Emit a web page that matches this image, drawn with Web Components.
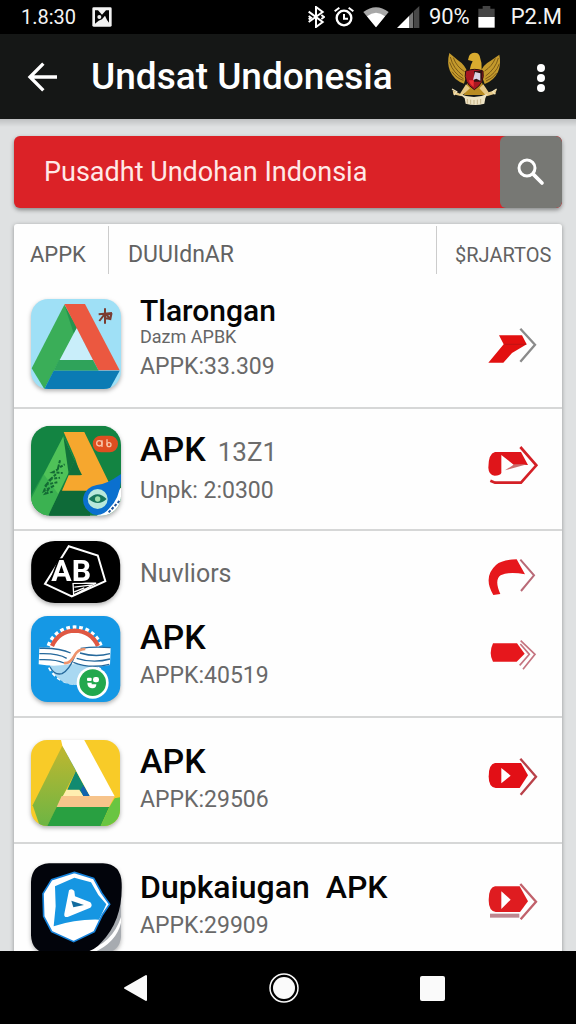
<!DOCTYPE html>
<html lang="id">
<head>
<meta charset="utf-8">
<meta name="viewport" content="width=device-width, initial-scale=1">
<title>Undsat Undonesia</title>
<style>
html, body { margin: 0; height: 100%; }
body { font-family: Roboto, "Liberation Sans", sans-serif; background: #dfe1e2; color: #000; }
</style>
</head>
<body>
<download-app></download-app>

<template id="t-app">
<style>
:host { display: flex; flex-direction: column; height: 100vh; }
main { flex: 1; min-height: 0; overflow-y: auto; scrollbar-width: none; padding: 17px 14px 0; background: linear-gradient(#bfc1c2, #dfe1e2 8px); }
.card { margin-top: 16px; background: #fefefe; border-radius: 3px 3px 0 0; box-shadow: 0 1px 4px rgba(0,0,0,.35); }
</style>
<status-bar></status-bar>
<app-bar></app-bar>
<main>
  <search-bar></search-bar>
  <div class="card">
    <list-head></list-head>
    <app-group style="--h:128px">
      <app-item compact>
        <app-icon slot="icon" name="drive"></app-icon>
        <span slot="title">Tlarongan</span><span slot="by">Dazm APBK</span><span slot="sub">APPK:33.309</span>
        <go-button slot="go" name="bolt"></go-button>
      </app-item>
    </app-group>
    <app-group style="--h:122px">
      <app-item>
        <app-icon slot="icon" name="green"></app-icon>
        <span slot="title">APK</span><span slot="note">13Z1</span><span slot="sub">Unpk: 2:0300</span>
        <go-button slot="go" name="outline"></go-button>
      </app-item>
    </app-group>
    <app-group style="--h:187px">
      <app-item plain>
        <app-icon slot="icon" name="ab"></app-icon>
        <span slot="sub">Nuvliors</span>
        <go-button slot="go" name="curve"></go-button>
      </app-item>
      <app-item>
        <app-icon slot="icon" name="sun"></app-icon>
        <span slot="title">APK</span><span slot="sub">APPK:40519</span>
        <go-button slot="go" name="tag"></go-button>
      </app-item>
    </app-group>
    <app-group style="--h:126px">
      <app-item>
        <app-icon slot="icon" name="yellow"></app-icon>
        <span slot="title">APK</span><span slot="sub">APPK:29506</span>
        <go-button slot="go" name="play"></go-button>
      </app-item>
    </app-group>
    <app-group style="--h:126px">
      <app-item long>
        <app-icon slot="icon" name="blue"></app-icon>
        <span slot="title">Dupkaiugan&nbsp; APK</span><span slot="sub">APPK:29909</span>
        <go-button slot="go" name="playfade"></go-button>
      </app-item>
    </app-group>
  </div>
</main>
<nav-bar></nav-bar>
</template>

<template id="t-status">
<style>
:host { display: flex; align-items: center; height: 34px; padding: 0 14px 0 21px; background: #000; color: #f4f4f4; font-size: 22px; line-height: 30px; flex: none; }
svg { display: block; flex: none; }
.time { font-size: 20px; }
.pic { margin-left: 16px; }
.right { margin-left: auto; display: flex; align-items: center; gap: 8px; }
.end { margin-left: 8px; }
</style>
<span class="time">1.8:30</span>
<svg class="pic" width="20" height="20" viewBox="0 0 60 60"><path fill="#f2f2f2" d="M5 1h50q4 0 4 4v50q0 4-4 4H5q-4 0-4-4V5q0-4 4-4z"/><path fill="#050505" d="M9 10h9l12 13 12-13h9v37l-6-8-6-13-9 11-10 4-11 9z"/><circle cx="22" cy="30" r="6" fill="#eee"/></svg>
<div class="right">
<svg width="18" height="22" viewBox="0 0 54 66"><path fill="none" stroke="#fff" stroke-width="6" d="M5 17l42 31-20 15V3l20 15L5 48M5 30l7 5-7 5M43 27l8 6-8 6"/></svg>
<svg width="22" height="22" viewBox="0 0 66 66"><circle cx="33" cy="36" r="22" fill="none" stroke="#fff" stroke-width="7"/><path fill="none" stroke="#fff" stroke-width="6" d="M5 16L19 5M61 16L47 5M33 24v14h12"/></svg>
<svg width="26" height="22" viewBox="0 0 78 66"><path fill="#a8a8a8" d="M1 18Q39-10 77 18L39 64z"/><path fill="#fff" d="M12 31Q39 10 66 31L39 64z"/></svg>
<svg width="24" height="22" viewBox="0 0 72 66"><path fill="#fff" d="M0 66L36 30v36z"/><path fill="#777" d="M36 30L48 18v48H36z"/><path fill="#484848" d="M50 16L67 0v66H50z"/></svg>
<span>90%</span>
<svg width="17" height="22" viewBox="0 0 51 66"><path fill="#444" d="M14 0h23v8h13v26H1V8h13z"/><path fill="#fff" d="M1 33h49v32H1z"/></svg>
<span class="end">P2.M</span>
</div>
</template>

<template id="t-bar">
<style>
:host { display: flex; align-items: center; height: 85px; padding: 0 28px 0 20px; background: #151716; color: #fff; flex: none; }
button { border: 0; background: none; padding: 0; color: inherit; display: block; }
svg { display: block; }
h1 { margin: 0 0 0 23px; font-size: 37px; line-height: 44px; font-weight: 500; white-space: nowrap; flex: 1; }
.crest { margin-right: 33px; }
</style>
<button aria-label="Kembali"><svg width="48" height="48" viewBox="60 158 144 144"><path fill="none" stroke="#fff" stroke-width="10" d="M171 230H92M130 190l-40 40 40 40"/></svg></button>
<h1>Undsat Undonesia</h1>
<svg class="crest" width="56" height="56" viewBox="472 146 168 168">
<path fill="#c49a2c" d="M482 158q-8 30 2 54 12 28 42 38l10-34q-6-22-30-38z"/>
<path fill="#c49a2c" d="M632 163q6 28-4 52-12 26-40 36l-12-34q4-22 30-36z"/>
<path fill="none" stroke="#6d4d12" stroke-width="2.500" d="M485 170q8 34 38 56M483 186q10 32 42 50M490 214q14 20 34 26M494 172q10 28 34 42M629 173q-8 32-38 54M632 190q-10 30-42 46M624 218q-14 18-32 24M620 174q-10 24-32 38"/>
<path fill="#d9ab2f" d="M541 168q4-11 17-11 12 0 15 10 8 22 6 42h-36q2-14 9-26l-14-4z"/>
<path fill="#b98b22" d="M538 240h40l14 44h-66z"/>
<path fill="#e6c987" d="M532 252l-18 28-22-10 2 12 24 6 26-24zM584 252l16 24 24-8-4 12-26 8-22-24z"/>
<path fill="none" stroke="#f1e2b8" stroke-width="4" d="M490 266l14 8-8 10M624 266l-12 8 8 8"/>
<path fill="#eee3c4" d="M512 280q46 20 84 0l-6 14-3 16q-28 8-56 0l-3-16z"/>
<path stroke="#b39d6b" stroke-width="2" d="M536 296v14M546 298v14M556 299v14M566 298v14M576 296v14"/>
<path fill="#a91722" stroke="#2c1010" stroke-width="3" d="M531 212q28-10 52 0 6 36-26 56-34-22-26-56z"/>
<path fill="#311" d="M556 212h24q3 22-4 32h-20z"/><path fill="#d7d3e2" d="M559 215l16 4v22l-12-6-10 4z"/><path fill="#e33" d="M541 240h14v20q-12-8-14-20z"/>
</svg>
<button aria-label="Menu lainnya"><svg width="13" height="34" viewBox="0 0 13 34"><g fill="#fff"><circle cx="6" cy="8" r="4"/><circle cx="6" cy="18" r="4"/><circle cx="6" cy="28" r="4"/></g></svg></button>
</template>

<template id="t-search">
<style>
:host { display: flex; height: 72px; border-radius: 6px; background: #db2227; box-shadow: 0 2px 4px rgba(0,0,0,.4); overflow: hidden; }
input { flex: 1; min-width: 0; border: 0; outline: 0; background: none; padding: 0 0 0 30px; font: 400 27px/36px Roboto, "Liberation Sans", sans-serif; color: #ffe9e7; }
button { border: 0; width: 62px; padding: 0; background: #777874; border-radius: 6px; display: grid; place-items: center; }
</style>
<input type="text" aria-label="Cari unduhan" value="Pusadht Undohan Indonsia">
<button aria-label="Cari"><svg width="28" height="28" viewBox="0 0 84 84"><circle cx="30" cy="30" r="24" fill="none" stroke="#fff" stroke-width="9"/><path stroke="#fff" stroke-width="11" stroke-linecap="round" d="M50 50l25 25"/></svg></button>
</template>

<template id="t-head">
<style>
:host { display: flex; height: 57px; font-size: 22px; color: #626262; align-items: flex-start; padding-top: 2px; box-sizing: border-box; }
span { height: 48px; line-height: 58px; box-sizing: border-box; white-space: nowrap; }
.a { width: 95px; padding-left: 16px; border-right: 1px solid #ccc; }
.b { flex: 1; padding-left: 19px; font-size: 23px; }
.c { width: 126px; padding-left: 18px; border-left: 1px solid #ccc; font-size: 20px; }
</style>
<span class="a">APPK</span><span class="b">DUUIdnAR</span><span class="c">$RJARTOS</span>
</template>

<template id="t-group">
<style>
:host { display: flex; flex-direction: column; justify-content: center; min-height: var(--h); gap: 3px; box-sizing: border-box; border-bottom: 2px solid #d6d7d7; }
</style>
<slot></slot>
</template>

<template id="t-item">
<style>
:host { display: flex; align-items: center; padding: 0 22px 0 17px; }
.text { flex: 1; min-width: 0; margin-left: 19px; white-space: nowrap; }
.title { font-size: 34px; line-height: 40px; font-weight: 500; color: #050505; }
.note { font-size: 26px; font-weight: 400; color: #6c6c6c; margin-left: 12px; }
.title, .by, .sub { display: block; }
.sub { font-size: 23px; line-height: 38px; color: #696969; }
:host([plain]) .sub { font-size: 25px; }
:host([compact]) .text { padding-bottom: 6px; }
:host([compact]) .title { font-size: 30px; line-height: 28px; }
.by { font-size: 18px; line-height: 24px; color: #666; }
:host([compact]) .sub { line-height: 36px; }
:host([long]) .title { font-size: 32px; }
.text > [hidden], .title > [hidden] { display: none; }
</style>
<slot name="icon"></slot>
<div class="text">
<div class="title"><slot name="title"></slot><span class="note"><slot name="note"></slot></span></div>
<div class="by"><slot name="by"></slot></div>
<div class="sub"><slot name="sub"></slot></div>
</div>
<slot name="go"></slot>
</template>

<template id="t-nav">
<style>
:host { display: flex; height: 73px; background: #000; align-items: center; justify-content: space-around; padding: 0 70px 0 62px; flex: none; }
button { border: 0; background: none; padding: 0; display: block; }
svg { display: block; }
</style>
<button aria-label="Kembali"><svg width="32" height="32" viewBox="0 0 32 32"><path fill="#fafafa" stroke="#fafafa" stroke-width="2" stroke-linejoin="round" d="M5 16L26 4v24z"/></svg></button>
<button aria-label="Beranda"><svg width="32" height="32" viewBox="0 0 32 32"><circle cx="16" cy="16" r="11" fill="#fafafa"/><circle cx="16" cy="16" r="14" fill="none" stroke="#fafafa" stroke-width="1.500"/></svg></button>
<button aria-label="Aplikasi terbaru"><svg width="32" height="32" viewBox="0 0 32 32"><rect x="4" y="4" width="25" height="25" rx="2" fill="#fafafa"/></svg></button>
</template>

<script>
const ICONS = {
drive: [90, '63 38 270 270', `<defs><clipPath id="k"><rect x="63" y="38" width="270" height="270" rx="52"/></clipPath></defs><g clip-path="url(#k)"><path fill="#9fe0f6" d="M63 38h270v270H63z"/><path fill="#c9eefa" d="M200 125l50 98H145z"/><path fill="#3aae58" d="M163 55l38 68-98 185-38-62z"/><path fill="#1d8a4c" d="M163 55l38 68-10 18z" opacity=".7"/><path fill="#eb5840" d="M163 53h62l104 199h-64z"/><path fill="#2fa35a" d="M147 221h102l17 32H131z"/><path fill="#0b7bb4" d="M131 253h198l-30 55H103z"/><path fill="none" stroke="#7a3c32" stroke-width="6" d="M285 66v46M266 84l40-4M268 104l17-22 18 17M290 84l14 0-3 14-13-2"/></g>`],
green: [90, '63 41 270 270', `<defs><clipPath id="k"><rect x="63" y="46" width="270" height="270" rx="58"/></clipPath></defs><g clip-path="url(#k)"><path fill="#138442" d="M63 46h270v270H63z"/><path fill="#0e6a38" d="M140 240h100v80H115z"/><path fill="#4fc258" d="M160 78l34 72-80 166H70l-12-40z"/><path fill="#2ea74c" d="M100 190l-45 80 20 46h40l30-64z" opacity=".6"/><path fill="#11733a" d="M160 78l34 72-18 40z"/><path fill="#f6a72e" d="M161 65h62l73 150-20 26H156l20-46h36l-16-50z"/><path fill="#11703b" d="M194 150l22 44h-42z"/><path fill="none" stroke="#136b34" stroke-width="6" stroke-dasharray="9 4 14 5" d="M150 150l-6 24 20-12M146 176l-18 10 30 2M138 192l-16 14 28-4M124 206l-14 16 32-6M110 222l-8 20 30-16M116 236l-10 14 22-6"/><rect x="248" y="76" width="76" height="50" rx="25" fill="#df4e20"/><g fill="none" stroke="#f8c3a6" stroke-width="4"><circle cx="268" cy="99" r="8"/><path d="M276 90v20"/><circle cx="297" cy="103" r="6"/><path d="M291 87v18"/></g><path fill="#fff" d="M334 230v90h-76z"/><path fill="#0b70cf" d="M334 190q0 70-36 104-20 26-50 18-34-20-28-52 8-30 40-36 30-2 74-34z"/><circle cx="263" cy="266" r="30" fill="#b9e8db"/><path fill="#16765b" d="M236 266q26-28 54 0-26 24-54 0z"/><circle cx="263" cy="266" r="8" fill="#9de0ac"/><path stroke="#1b5298" stroke-width="6" stroke-dasharray="8 5" d="M296 306l36-38"/></g>`],
ab: [62, '61 36 272 188', `<rect x="61" y="30" width="270" height="188" rx="72"/><path fill="none" stroke="#fff" stroke-width="6" d="M175 46l88 28 23 78-102 46-81-38z"/><path fill="none" stroke="#fff" stroke-width="4" d="M188 158h70l-68 36zM192 170l60-8M192 184l30-12"/><text x="122" y="150" fill="#fff" stroke="#000" stroke-width="10" paint-order="stroke" font-family="Roboto" font-weight="700" font-size="92">AB</text>`],
sun: [96, '63 231 270 288', `<rect x="63" y="255" width="268" height="258" rx="50" fill="#1598e5"/><circle cx="194" cy="372" r="82" fill="none" stroke="#fff" stroke-width="14" stroke-dasharray="11 8"/><circle cx="194" cy="372" r="78" fill="#fff"/><path fill="none" stroke="#df5843" stroke-width="13" d="M126 345q20-44 68-46 50 2 70 46"/><path fill="#a9d8f1" d="M116 390q60 20 154 0-14 66-76 72-62-6-78-72z"/><path fill="#fff" d="M88 350q60-4 94 14 40-24 120-14l-2 52q-60 12-108-6-50 14-106 4z"/><path fill="none" stroke="#26699c" stroke-width="4" d="M88 352q60-2 94 14M88 368q56-2 82 14M88 386q50-2 74 10M212 352q40-6 90-2M210 366q46 14 90 2M200 382q50 16 100 2M190 394q50 20 108 6M120 408q14 26 36 20 22-12 36-48 8-26 38-30"/><path fill="none" stroke="#ef936b" stroke-width="8" d="M162 396q18 2 30-20 10-22 34-22"/><circle cx="248" cy="455" r="48" fill="#fff"/><circle cx="248" cy="455" r="40" fill="#22a84e"/><g fill="#fff"><rect x="231" y="440" width="14" height="10" rx="3"/><rect x="249" y="438" width="18" height="16" rx="7"/><path d="M232 455h13v5h14q0 13-13 12-14-2-14-17z"/></g>`],
yellow: [92, '63 42 270 276', `<defs><clipPath id="k"><rect x="63" y="60" width="267" height="258" rx="48"/></clipPath><linearGradient id="g" x1="0" y1="0" x2="0" y2="1"><stop offset="0" stop-color="#c0b72f"/><stop offset="1" stop-color="#6cb544"/></linearGradient></defs><g clip-path="url(#k)"><path fill="#f8cb28" d="M63 60h270v260H63z"/><path fill="#ffeeb0" d="M170 208h50l16 22h-80z"/><path fill="url(#g)" d="M157 77l42 73-88 170H90l-22-64z"/><path fill="#118a70" d="M157 77l82 152h-18l-13-20h-36l27-59z"/><path fill="#1263ad" d="M220 196l20 33h-20l-8-20z"/><path fill="#fff" d="M152 55h68l94 174h-74l-83-152z"/><path fill="#f7c48b" d="M155 228h159l-17 33H140z"/><path fill="#29a041" d="M140 261h158l-27 60H110z"/><path fill="#69c541" d="M330 232v90h-60l28-61 16-26z"/></g>`],
blue: [90, '60 62 270 270', `<path fill="#a7abb0" d="M250 130h80v160q-4 44-50 49h-90z"/><path fill="#fff" d="M330 230q-26 80-104 100l-40 9 60-2q70-30 84-90z"/><path fill="#02040b" d="M114 69h162q54 2 56 60 4 110-60 176-22 28-60 34h-98q-52-2-54-54V125q2-52 54-56z"/><path fill="#fff" stroke="#1683dc" stroke-width="5" d="M190 96l58 18 24 44 24 34-22 32-24 50-62 30-66-30-24-46-2-68 26-42z"/><path fill="#1696e2" d="M190 112l50 14 22 38 24 28-22 46q-70-2-136 20l6-60-2-60z"/><path fill="#fff" d="M174 150q8-8 16 2l2 16 46 18q8 10 0 16l-68 28q-12 2-10-10z"/><path fill="#126b9e" d="M181 181l38 13-32 7z"/>`]
};
const ARROWS = {
bolt: ['45 36 162 132', '<path fill="#e21010" d="M84 76h69l14 27-44 26-26 29H52l46-55z"/><path stroke="#ad1515" stroke-width="2" d="M100 103h66"/><path fill="none" stroke="#8b8b8b" stroke-width="7" d="M148 56l44 48-44 51"/>'],
outline: ['45 411 162 132', '<path fill="#df151a" d="M72 426h78l21 39h-42l-38-30v54q-4 8-20 8-18-2-19-24 0-42 20-47z"/><path fill="#cc6d6d" d="M102 481l28-18h38z"/><path fill="none" stroke="#d42026" stroke-width="8" d="M148 411l48 55-46 52H72l-14-6"/>'],
curve: ['45 30 162 132', '<path fill="#e6171c" d="M67 159q-32-54 8-90 18-16 62-17l25 45q-48-10-73 3-20 14-1 56z"/><path fill="none" stroke="#b96a77" stroke-width="6" d="M148 53l41 47-39 47"/>'],
tag: ['45 276 162 132', '<path fill="#e6171c" d="M66 304h72l23 31-24 24H66q-14-25 0-55z"/><path fill="none" stroke="#c57480" stroke-width="5" d="M148 306l27 31-29 33M149 296l43 41-36 45"/>'],
play: ['45 54 162 132', '<path fill="#e20f16" d="M72 69h78l21 37-25 38H74q-21-3-21-34 0-38 19-41z"/><path fill="#fff" d="M91 84l28 23-28 23z"/><path fill="none" stroke="#b94149" stroke-width="7" d="M148 56l47 54-46 54"/>'],
playfade: ['45 432 162 132', '<path stroke="#bd8790" stroke-width="12" d="M57 527h88"/><path fill="#df1c20" d="M72 439h74l25 45-24 32H74q-21-3-21-36 0-38 19-41z"/><path fill="#fff" d="M91 454l28 25-28 28z"/><path fill="none" stroke="#c1616b" stroke-width="7" d="M148 432l47 53-46 53"/>']
};
function define(tag, id) {
  customElements.define(tag, class extends HTMLElement {
    constructor() {
      super();
      this.attachShadow({ mode: 'open' }).append(document.getElementById(id).content.cloneNode(true));
    }
  });
}
customElements.define('app-icon', class extends HTMLElement {
  connectedCallback() {
    const [h, box, art] = ICONS[this.getAttribute('name')];
    this.attachShadow({ mode: 'open' }).innerHTML = `<style>:host{display:block;flex:none}svg{display:block;overflow:visible;filter:drop-shadow(0 2px 2px rgba(0,0,0,.3))}</style><svg width="90" height="${h}" viewBox="${box}" aria-hidden="true">${art}</svg>`;
  }
});
customElements.define('go-button', class extends HTMLElement {
  connectedCallback() {
    const [box, art] = ARROWS[this.getAttribute('name')];
    this.attachShadow({ mode: 'open' }).innerHTML = `<style>:host{display:block;flex:none}button{display:block;border:0;padding:0;background:none}svg{display:block;overflow:visible}</style><button aria-label="Unduh"><svg width="54" height="44" viewBox="${box}">${art}</svg></button>`;
  }
});
customElements.define('app-item', class extends HTMLElement {
  constructor() {
    super();
    const root = this.attachShadow({ mode: 'open' });
    root.append(document.getElementById('t-item').content.cloneNode(true));
    for (const name of ['title', 'by', 'note', 'sub']) {
      const slot = root.querySelector(`slot[name=${name}]`);
      slot.addEventListener('slotchange', () => this.update());
    }
  }
  connectedCallback() { this.update(); }
  update() {
    for (const name of ['title', 'by', 'note', 'sub'])
      this.shadowRoot.querySelector('.' + name).hidden = !this.querySelector(`[slot=${name}]`);
  }
});
define('status-bar', 't-status');
define('app-bar', 't-bar');
define('search-bar', 't-search');
define('list-head', 't-head');
define('app-group', 't-group');
define('nav-bar', 't-nav');
define('download-app', 't-app');
</script>
</body>
</html>
